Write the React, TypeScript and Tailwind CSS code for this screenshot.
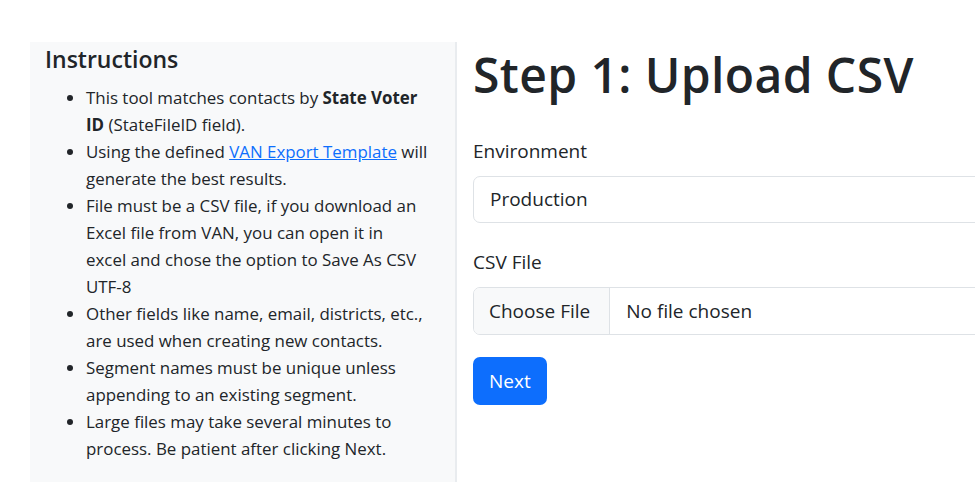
const font = { fontFamily: '"Open Sans", "Noto Sans", sans-serif' };

const items: React.ReactNode[] = [
  <>
    This tool matches contacts by <b className="font-bold">State Voter</b>
    <br />
    <b className="font-bold">ID</b> (StateFileID field).
  </>,
  <>
    Using the defined{" "}
    <a href="#" className="text-[#0d6efd] underline">
      VAN Export Template
    </a>{" "}
    will
    <br />
    generate the best results.
  </>,
  <>
    File must be a CSV file, if you download an
    <br />
    Excel file from VAN, you can open it in
    <br />
    excel and chose the option to Save As CSV
    <br />
    UTF-8
  </>,
  <>
    Other fields like name, email, districts, etc.,
    <br />
    are used when creating new contacts.
  </>,
  <>
    Segment names must be unique unless
    <br />
    appending to an existing segment.
  </>,
  <>
    Large files may take several minutes to
    <br />
    process. Be patient after clicking Next.
  </>,
];

export default function App() {
  return (
    <div
      className="h-[489px] w-[975px] overflow-hidden bg-white text-[#212529]"
      style={font}
    >
      <div className="flex pl-[30px] pt-[42px]">
        <aside className="h-[440px] w-[427px] shrink-0 border-r-2 border-[#e9ecef] bg-[#f8f9fa] px-[15px] pt-[2px]">
          <h4 className="text-[23px] font-semibold leading-[30px]">Instructions</h4>
          <ul className="mt-[10px] list-disc pl-[41px] text-[16.9px] leading-[27px] marker:text-[#212529]">
            {items.map((it, i) => (
              <li key={i} className="whitespace-nowrap">
                {it}
              </li>
            ))}
          </ul>
        </aside>
        <main className="w-[620px] shrink-0 pl-[16px]">
          <h1 className="mt-[3px] text-[48px] font-semibold leading-[60px] tracking-[0.4px]">
            Step 1: Upload CSV
          </h1>
          <label className="mt-[33px] block text-[19px] leading-[27px]">Environment</label>
          <div className="mt-[11px] flex h-[47px] items-center rounded-[7px] border border-[#dee2e6] px-[16px] text-[19px]">
            Production
          </div>
          <label className="mt-[26px] block text-[19px] leading-[27px]">CSV File</label>
          <div className="mt-[11px] flex h-[48px] items-stretch overflow-hidden rounded-[7px] border border-[#dee2e6] text-[19px]">
            <span className="flex items-center border-r border-[#dee2e6] bg-[#f8f9fa] pl-[15px] pr-[19px]">
              Choose File
            </span>
            <span className="flex items-center px-[16px]">No file chosen</span>
          </div>
          <button className="mt-[22px] h-[48px] rounded-[7px] bg-[#0d6efd] px-[16px] text-[19px] text-white">
            Next
          </button>
        </main>
      </div>
    </div>
  );
}
